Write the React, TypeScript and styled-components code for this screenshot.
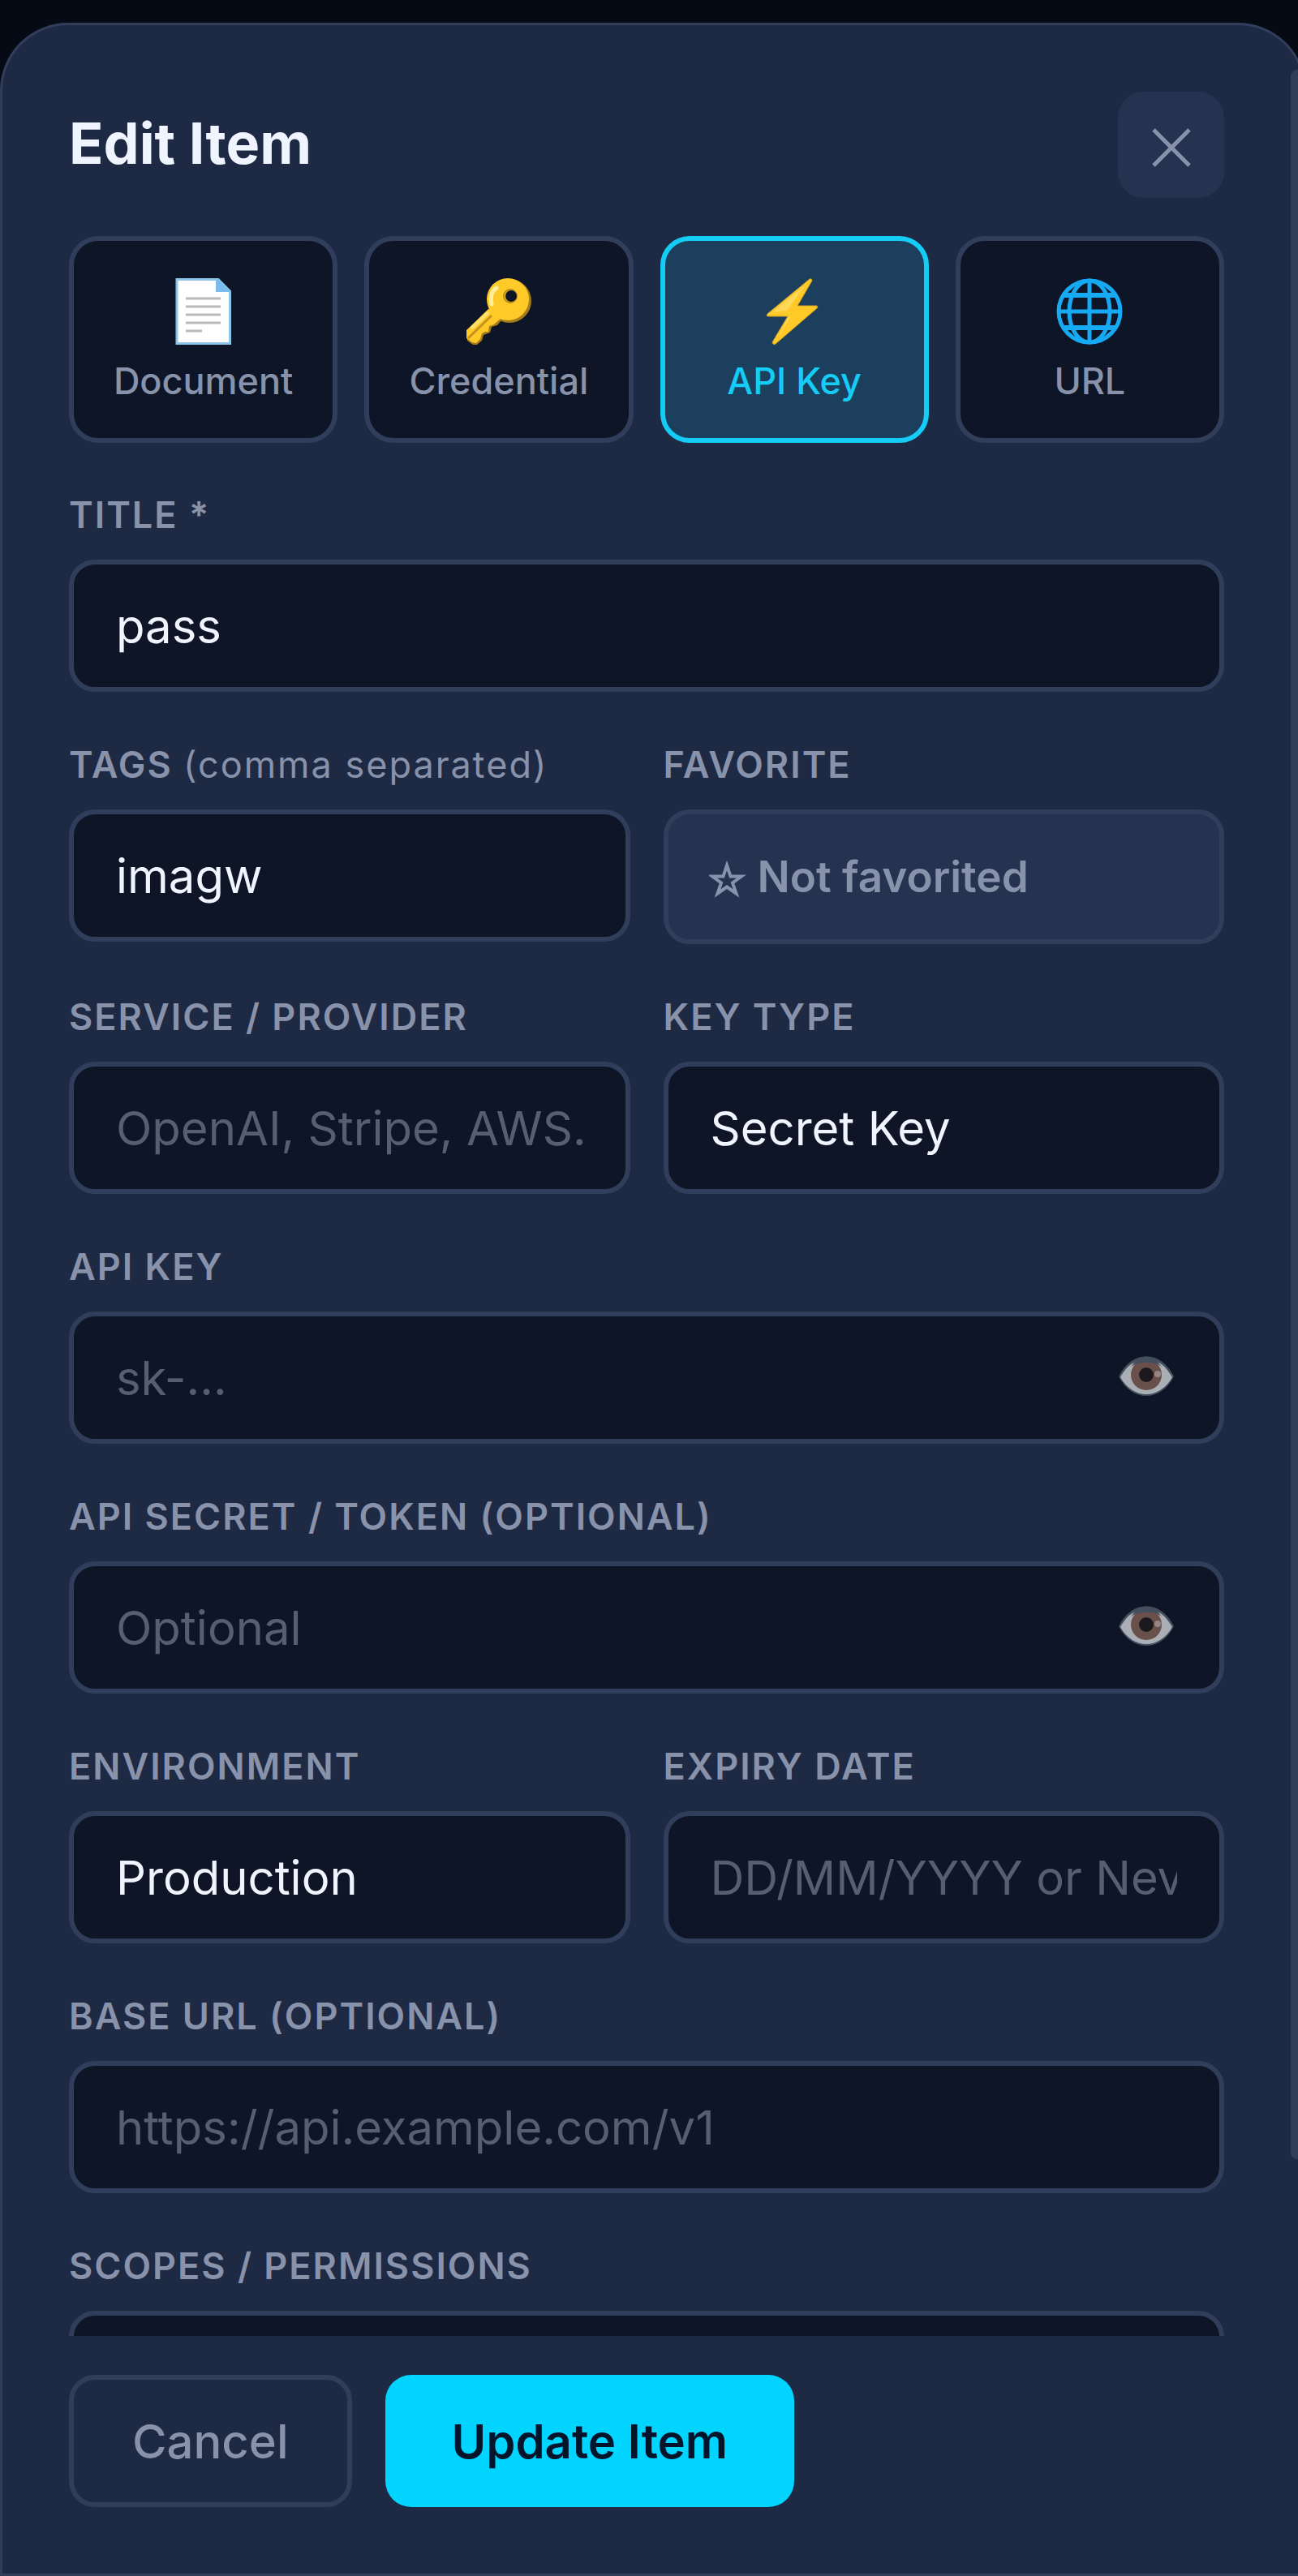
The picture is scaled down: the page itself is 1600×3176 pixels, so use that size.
import React, { useState } from "react";
import styled, { createGlobalStyle, css } from "styled-components";

const c = {
  page: "#050a14",
  panel: "#1e2944",
  field: "#0e1526",
  line: "#303e5c",
  raised: "#253250",
  text: "#f0f4ff",
  muted: "#8892aa",
  faint: "#565e70",
  accent: "#00d4ff",
};

const GlobalStyle = createGlobalStyle`
  *, *::before, *::after { box-sizing: border-box; }
  body { margin: 0; background: ${c.page}; overflow: hidden; }
  body, button, input, select, textarea { font-family: Inter, "Noto Sans", sans-serif; }
`;

const Backdrop = styled.div`
  height: 100vh;
  padding-top: 28px;
  overflow: hidden;
  background: ${c.page};
`;

const Panel = styled.form`
  position: relative;
  display: flex;
  flex-direction: column;
  width: calc(100% + 10px);
  height: 100%;
  background: ${c.panel};
  border: 3px solid ${c.line};
  border-radius: 84px 84px 0 0;
`;

const ScrollThumb = styled.div`
  position: absolute;
  top: 55px;
  right: 0;
  width: 16px;
  height: 82%;
  border-radius: 9px;
  background: ${c.line};
`;

const Content = styled.div`
  flex: 1;
  min-height: 0;
  overflow: hidden;
  padding: 82px 98px 0 82px;
`;

const Header = styled.header`
  display: flex;
  align-items: center;
  justify-content: space-between;
  margin-bottom: 47px;
`;

const Title = styled.h1`
  margin: 0;
  padding-bottom: 4px;
  color: ${c.text};
  font-size: 70px;
  line-height: 84px;
  font-weight: 700;
`;

const CloseButton = styled.button`
  display: grid;
  place-items: center;
  width: 131px;
  height: 131px;
  padding: 6px 0 0;
  border: 0;
  border-radius: 32px;
  background: ${c.raised};
  color: ${c.muted};
`;

const Types = styled.div`
  display: grid;
  grid-template-columns: repeat(4, 1fr);
  gap: 33px;
  margin-bottom: 62px;
`;

const TypeButton = styled.button<{ $active: boolean }>`
  display: flex;
  flex-direction: column;
  align-items: center;
  gap: 18px;
  height: 255px;
  padding: 46px 0 0;
  border: 6px solid ${(p) => (p.$active ? "#14ccf5" : c.line)};
  border-radius: 36px;
  background: ${(p) => (p.$active ? "#1b3f5c" : c.field)};
  color: ${(p) => (p.$active ? "#14ccf5" : c.muted)};
  font-size: 45px;
  line-height: 54px;
  font-weight: 500;
`;

const Row = styled.div`
  display: grid;
  grid-auto-flow: column;
  grid-auto-columns: minmax(0, 1fr);
  gap: 41px;
  align-items: start;
  margin-bottom: 63px;
`;

const FieldBox = styled.div`
  display: flex;
  flex-direction: column;
  gap: 28px;
`;

const Label = styled.label`
  color: ${c.muted};
  font-size: 45px;
  line-height: 54px;
  font-weight: 600;
  letter-spacing: 2px;
  white-space: nowrap;
`;

const Hint = styled.span`
  font-weight: 400;
`;

const control = css`
  display: block;
  width: 100%;
  height: 163px;
  margin: 0;
  padding: 0 52px;
  border: 6px solid ${c.line};
  border-radius: 32px;
  outline: 0;
  background: ${c.field};
  color: ${c.text};
  font-size: 58px;
  line-height: 70px;
  &::placeholder {
    color: ${c.faint};
    opacity: 1;
  }
`;

const Input = styled.input`
  ${control}
`;

const Select = styled.select`
  ${control}
  appearance: none;
`;

const TextArea = styled.textarea`
  ${control}
  height: 300px;
  padding: 42px 52px;
  resize: none;
`;

const FavoriteButton = styled.button`
  ${control}
  display: flex;
  align-items: center;
  gap: 14px;
  height: 166px;
  padding: 0 50px;
  background: ${c.raised};
  color: ${c.muted};
  font-size: 53px;
  font-weight: 600;
`;

const SecretBox = styled.div`
  position: relative;
`;

const RevealButton = styled.button`
  position: absolute;
  top: 0;
  right: 62px;
  height: 100%;
  padding: 0;
  border: 0;
  background: none;
  opacity: 0.7;
`;

const Footer = styled.footer`
  display: flex;
  gap: 41px;
  padding: 48px 82px 82px;
`;

const FooterButton = styled.button<{ $primary?: boolean }>`
  height: 163px;
  padding: 0 ${(p) => (p.$primary ? 82 : 72)}px;
  border: ${(p) => (p.$primary ? "0" : `6px solid ${c.line}`)};
  border-radius: 32px;
  background: ${(p) => (p.$primary ? c.accent : "transparent")};
  color: ${(p) => (p.$primary ? "#04142a" : c.muted)};
  font-size: 58px;
  line-height: 70px;
  font-weight: ${(p) => (p.$primary ? 600 : 500)};
`;

const DocumentIcon = () => (
  <svg width="82" height="82" viewBox="0 0 82 82" aria-hidden="true">
    <path d="M8 1.500H59L73.500 16V80.500H8Z" fill="#fff" stroke="#8cc5e8" strokeWidth="3" />
    <path d="M58 0L75 17H56V4Z" fill="#78bdec" />
    <path d="M19 25H62M19 35H62M19 45H62M19 55H62M19 65H39" stroke="#bababa" strokeWidth="3" />
  </svg>
);

const KeyIcon = () => (
  <svg width="82" height="82" viewBox="0 0 82 82" aria-hidden="true">
    <defs>
      <mask id="key-hole">
        <rect width="82" height="82" fill="#fff" />
        <circle cx="56" cy="22" r="7" fill="#000" />
      </mask>
    </defs>
    <g mask="url(#key-hole)">
      <g fill="#a57c1c">
        <circle cx="54" cy="28" r="27" />
        <path d="M30 38L2 66L2 77L9 82H14L20 77L22 70L30 67L32 60L39 58L44 52Z" />
      </g>
      <g fill="#ffca28">
        <circle cx="52" cy="26" r="26" />
        <path d="M28 38L1 64V74L8 79L13 80L18 75L20 68L24 66L28 66L29 59L35 57L44 49L40 38Z" />
      </g>
      <circle cx="55" cy="22" r="8" fill="none" stroke="#b78a1c" strokeWidth="2" />
    </g>
    <path d="M3 74L32 46" stroke="#c2921d" strokeWidth="3" />
    <path d="M32 32C30 22 33 15 38 12" stroke="#ffee9c" strokeWidth="5" strokeLinecap="round" fill="none" />
    <path d="M8 61L27 43" stroke="#ffdf6d" strokeWidth="4" strokeLinecap="round" />
  </svg>
);

const BoltIcon = () => (
  <svg width="82" height="82" viewBox="0 0 82 82" aria-hidden="true">
    <path
      d="M60 1L8 44Q6 47 9 47H33L14 79Q15 83 18 81L69 37Q71 34 68 34H45L63 3Q63 0 60 1Z"
      fill="#ffca28"
      stroke="#cf9c27"
      strokeWidth="1"
    />
    <path d="M55 8L14 42L32 40Z" fill="#ffe07a" opacity=".6" />
    <path d="M37 46L22 72L33 50Z" fill="#ffe07a" />
  </svg>
);

const GlobeIcon = () => (
  <svg width="82" height="82" viewBox="0 0 82 82" fill="none" stroke="#16aaf5" strokeWidth="5" aria-hidden="true">
    <circle cx="41" cy="41" r="38" />
    <ellipse cx="41" cy="41" rx="25" ry="38" />
    <path d="M41 3V79M3 41H79" />
    <path d="M9 21H73M9 61H73" strokeWidth="6" />
  </svg>
);

const EyeIcon = () => (
  <svg width="68" height="50" viewBox="0 0 68 50" aria-hidden="true">
    <path d="M0 25C16 -8 52 -8 68 25C52 57 16 57 0 25Z" fill="#5c6876" />
    <path d="M2 26C16 3 22 8 34 8C46 8 52 3 66 26C50 54 18 54 2 26Z" fill="#edf1f4" />
    <circle cx="34" cy="23" r="19" fill="#91695a" />
    <path d="M15 13C24 0 44 0 53 13C44 6 24 6 15 13Z" fill="#5c6876" />
    <circle cx="34" cy="23" r="9" fill="#211c1c" />
    <circle cx="48" cy="22" r="4" fill="#ceb5ab" />
  </svg>
);

const StarIcon = () => (
  <svg width="46" height="52" viewBox="2 0 46 52" aria-hidden="true">
    <path
      d="M24 12L28.500 25.500H42L31 33.500L35.500 46.500L24 38.500L12.500 46.500L17 33.500L6 25.500H19.500Z"
      fill="none"
      stroke="currentColor"
      strokeWidth="4"
    />
  </svg>
);

const types = [
  { name: "Document", Icon: DocumentIcon },
  { name: "Credential", Icon: KeyIcon },
  { name: "API Key", Icon: BoltIcon },
  { name: "URL", Icon: GlobeIcon },
];

type FieldProps = { id: string; label: React.ReactNode; children: React.ReactNode };

const Field = ({ id, label, children }: FieldProps) => (
  <FieldBox>
    <Label htmlFor={id}>{label}</Label>
    {children}
  </FieldBox>
);

const SecretInput = ({ id, placeholder }: { id: string; placeholder: string }) => {
  const [shown, setShown] = useState(false);
  return (
    <SecretBox>
      <Input id={id} type={shown ? "text" : "password"} placeholder={placeholder} />
      <RevealButton type="button" aria-label="Show value" onClick={() => setShown(!shown)}>
        <EyeIcon />
      </RevealButton>
    </SecretBox>
  );
};

export default function App() {
  const [active, setActive] = useState("API Key");
  return (
    <>
      <GlobalStyle />
      <Backdrop>
        <Panel onSubmit={(e) => e.preventDefault()}>
          <Content>
            <Header>
              <Title>Edit Item</Title>
              <CloseButton type="button" aria-label="Close">
                <svg width="50" height="50" viewBox="0 0 50 50" stroke="currentColor" strokeWidth="5" aria-hidden="true">
                  <path d="M3 3L47 47M47 3L3 47" />
                </svg>
              </CloseButton>
            </Header>
            <Types>
              {types.map(({ name, Icon }) => (
                <TypeButton key={name} type="button" $active={name === active} onClick={() => setActive(name)}>
                  <Icon />
                  {name}
                </TypeButton>
              ))}
            </Types>
            <Row>
              <Field id="title" label="TITLE *">
                <Input id="title" defaultValue="pass" />
              </Field>
            </Row>
            <Row>
              <Field id="tags" label={<>TAGS <Hint>(comma separated)</Hint></>}>
                <Input id="tags" defaultValue="imagw" />
              </Field>
              <Field id="favorite" label="FAVORITE">
                <FavoriteButton id="favorite" type="button">
                  <StarIcon />
                  Not favorited
                </FavoriteButton>
              </Field>
            </Row>
            <Row>
              <Field id="service" label="SERVICE / PROVIDER">
                <Input id="service" placeholder="OpenAI, Stripe, AWS..." />
              </Field>
              <Field id="keytype" label="KEY TYPE">
                <Select id="keytype">
                  <option>Secret Key</option>
                </Select>
              </Field>
            </Row>
            <Row>
              <Field id="apikey" label="API KEY">
                <SecretInput id="apikey" placeholder="sk-..." />
              </Field>
            </Row>
            <Row>
              <Field id="secret" label="API SECRET / TOKEN (OPTIONAL)">
                <SecretInput id="secret" placeholder="Optional" />
              </Field>
            </Row>
            <Row>
              <Field id="environment" label="ENVIRONMENT">
                <Select id="environment">
                  <option>Production</option>
                </Select>
              </Field>
              <Field id="expiry" label="EXPIRY DATE">
                <Input id="expiry" placeholder="DD/MM/YYYY or Never" />
              </Field>
            </Row>
            <Row>
              <Field id="baseurl" label="BASE URL (OPTIONAL)">
                <Input id="baseurl" placeholder="https://api.example.com/v1" />
              </Field>
            </Row>
            <Row>
              <Field id="scopes" label="SCOPES / PERMISSIONS">
                <TextArea id="scopes" />
              </Field>
            </Row>
          </Content>
          <Footer>
            <FooterButton type="button">Cancel</FooterButton>
            <FooterButton type="submit" $primary>
              Update Item
            </FooterButton>
          </Footer>
          <ScrollThumb />
        </Panel>
      </Backdrop>
    </>
  );
}
